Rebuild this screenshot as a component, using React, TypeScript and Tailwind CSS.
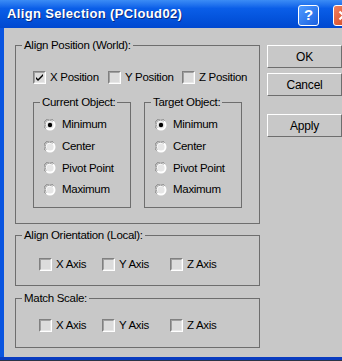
import type { ReactNode } from "react";

const font = { fontFamily: '"Liberation Sans", Arial, sans-serif' };

function CheckBox({ checked = false }: { checked?: boolean }) {
  return (
    <span className="relative inline-block w-[13px] h-[13px] shrink-0 border border-t-[#808080] border-l-[#808080] border-b-white border-r-white bg-[#dcdcdc]">
      <span className="absolute inset-0 border border-t-[#a0a0a0] border-l-[#a0a0a0] border-b-[#e8e8e8] border-r-[#e8e8e8]" />
      {checked && (
        <svg className="absolute left-[1px] top-[1px]" width="9" height="9" viewBox="0 0 9 9">
          <path d="M1 4 L3 6 L8 1 L8 3 L3 8 L1 6 Z" fill="#000" />
        </svg>
      )}
    </span>
  );
}

function Radio({ checked = false }: { checked?: boolean }) {
  return (
    <svg width="12" height="12" viewBox="0 0 12 12" className="shrink-0">
      <circle cx="6" cy="6" r="5.5" fill="#ffffff" />
      <path d="M1.5 9.5 A5.5 5.5 0 0 1 9.5 1.5" stroke="#808080" strokeWidth="1" fill="none" />
      <path d="M2.5 8.5 A4 4 0 0 1 8.5 2.5" stroke="#a0a0a0" strokeWidth="1" fill="none" />
      <circle cx="6" cy="6" r="3.6" fill="#e6e6e6" />
      {checked && <circle cx="6" cy="6" r="2.2" fill="#000" />}
    </svg>
  );
}

function Group({ title, className, children }: { title: string; className: string; children: ReactNode }) {
  return (
    <fieldset className={`border border-[#6e6e6e] shrink-0 ${className}`}>
      <legend className="ml-[6px] px-[2px] leading-[14px]">{title}</legend>
      {children}
    </fieldset>
  );
}

function Button({ label }: { label: string }) {
  return (
    <button className="w-[75px] h-[23px] bg-[#c8c8c8] border border-t-white border-l-white border-b-[#6e6e6e] border-r-[#6e6e6e] text-black text-[12px] tracking-[-0.2px]">
      {label}
    </button>
  );
}

function RadioList({ selected }: { selected: number }) {
  const items = ["Minimum", "Center", "Pivot Point", "Maximum"];
  return (
    <div className="flex flex-col gap-[9.7px] pl-[10px] pt-[10px]">
      {items.map((t, i) => (
        <div key={t} className="flex items-center gap-[6px] h-[12px]">
          <Radio checked={i === selected} />
          <span>{t}</span>
        </div>
      ))}
    </div>
  );
}

function AxisRow({ top }: { top: string }) {
  return (
    <div className={`flex items-center pl-[23px] h-[13px] ${top}`}>
      <div className="flex items-center gap-[4px] w-[63px]">
        <CheckBox />
        <span>X Axis</span>
      </div>
      <div className="flex items-center gap-[4px] w-[68px]">
        <CheckBox />
        <span>Y Axis</span>
      </div>
      <div className="flex items-center gap-[4px]">
        <CheckBox />
        <span>Z Axis</span>
      </div>
    </div>
  );
}

export default function App() {
  return (
    <div
      className="w-[342px] h-[361px] overflow-hidden flex flex-col bg-[#1c2a4a] text-[11.5px] tracking-[-0.3px] text-black"
      style={font}
    >
      {/* Title bar */}
      <div className="h-[28px] shrink-0 flex items-center bg-gradient-to-b from-[#3b8cf5] via-[#0a5ee8] via-30% to-[#0048d0] pl-[7px]">
        <span className="text-white font-bold text-[13px] tracking-[0.35px] [text-shadow:1px_1px_0_#0a2a80] flex-1">
          Align Selection (PCloud02)
        </span>
        <div className="w-[21px] h-[21px] rounded-[3px] border border-white bg-gradient-to-br from-[#4f9bff] to-[#1a5fe0] flex items-center justify-center text-white font-bold text-[15px] mt-[2px]">
          ?
        </div>
        <div className="w-[21px] h-[21px] ml-[2px] rounded-[3px] border border-white bg-gradient-to-br from-[#f08060] to-[#d04010] flex items-center justify-center mt-[2px] shrink-0 translate-x-[12px]">
          <svg width="11" height="11" viewBox="0 0 11 11">
            <path d="M1.5 1.5 L9.5 9.5 M9.5 1.5 L1.5 9.5" stroke="#fff" strokeWidth="2.2" />
          </svg>
        </div>
      </div>

      {/* Body */}
      <div className="h-[329px] shrink-0 flex bg-[#c8c8c8] border-l-[4px] border-[#0a55e0]">
        <div className="flex flex-col pl-[11px] pt-[10px] w-[256px]">
          <Group title="Align Position (World):" className="h-[186px] w-[245px]">
            <div className="flex items-center pl-[17px] mt-[19px] h-[13px]">
              <div className="flex items-center gap-[4px] w-[75px]">
                <CheckBox checked />
                <span>X Position</span>
              </div>
              <div className="flex items-center gap-[4px] w-[74px]">
                <CheckBox />
                <span>Y Position</span>
              </div>
              <div className="flex items-center gap-[4px]">
                <CheckBox />
                <span>Z Position</span>
              </div>
            </div>
            <div className="flex gap-[13px] pl-[17px] pt-[11px]">
              <Group title="Current Object:" className="w-[98px] h-[113px]">
                <RadioList selected={0} />
              </Group>
              <Group title="Target Object:" className="w-[98px] h-[113px]">
                <RadioList selected={0} />
              </Group>
            </div>
          </Group>
          <Group title="Align Orientation (Local):" className="h-[58px] w-[245px] mt-[4px]">
            <AxisRow top="mt-[16px]" />
          </Group>
          <Group title="Match Scale:" className="h-[57px] w-[245px] mt-[5px]">
            <AxisRow top="mt-[14px]" />
          </Group>
        </div>
        <div className="flex flex-col pl-[7px] pt-[17px]">
          <Button label="OK" />
          <div className="h-[5px]" />
          <Button label="Cancel" />
          <div className="h-[18px]" />
          <Button label="Apply" />
        </div>
      </div>
      <div className="h-[3px] shrink-0 bg-[#0a3cc0]" />
      <div className="h-[1px] shrink-0 bg-[#2a3448]" />
    </div>
  );
}
